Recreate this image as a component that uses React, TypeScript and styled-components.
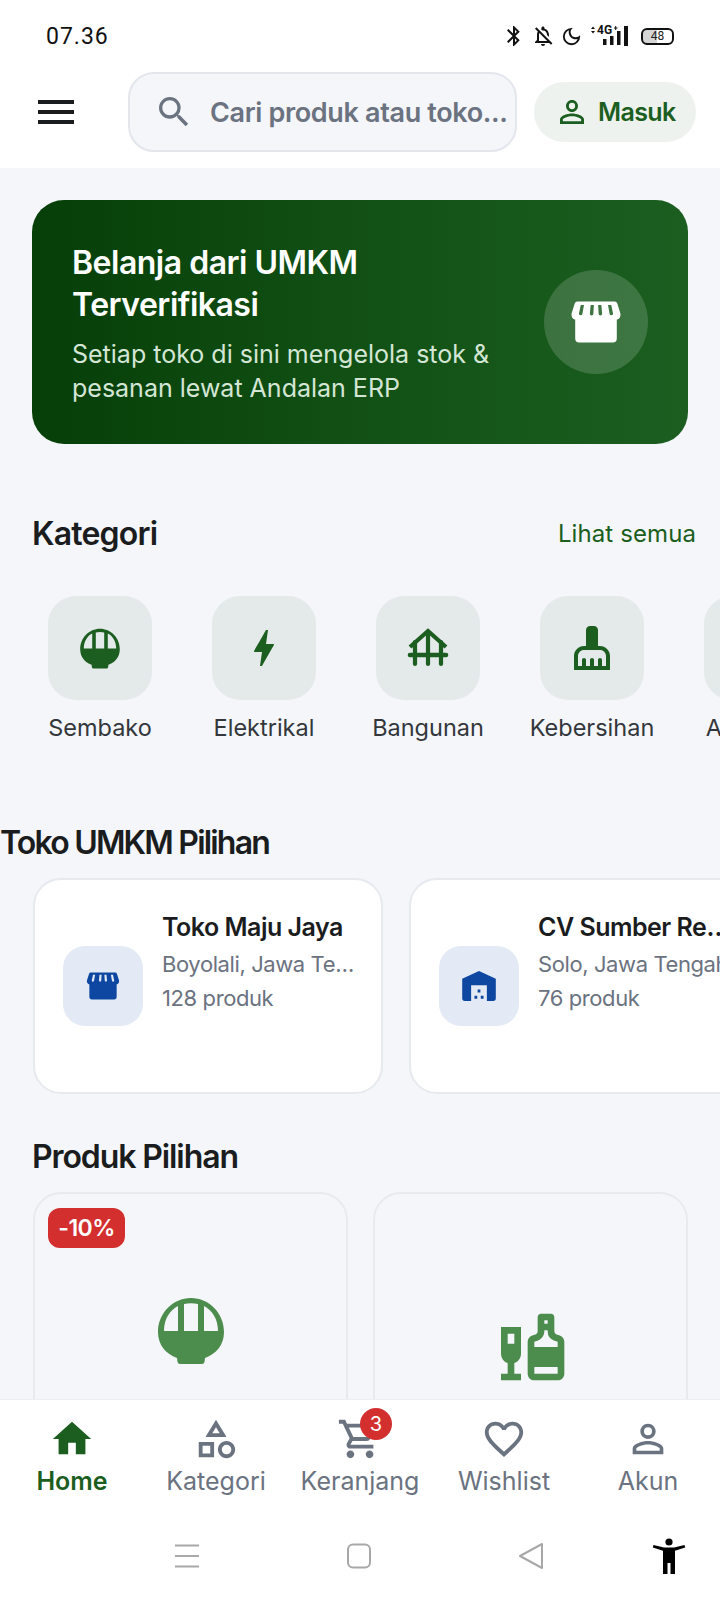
import React from "react";
import styled, { createGlobalStyle } from "styled-components";
import {
  MdBluetooth,
  MdBolt,
  MdCleaningServices,
  MdFavoriteBorder,
  MdHome,
  MdLiquor,
  MdMenu,
  MdOutlineCategory,
  MdOutlineDarkMode,
  MdOutlineNotificationsOff,
  MdOutlineShoppingCart,
  MdPersonOutline,
  MdSearch,
} from "react-icons/md";

const GREEN = "#1b5e20";
const BLUE = "#0d47a1";
const GREY = "#6b7280";

type IconProps = { size: number };

function RiceBowlIcon({ size }: IconProps) {
  return (
    <svg width={size} height={size} viewBox="0 0 80 80" fill="currentColor" fillRule="evenodd">
      <path d="M40 8C58 8 73 23 73 42C73 55 65 64 54 68L53.5 72Q53 74 51 74H29Q27 74 26.5 72L26 68C15 64 7 55 7 42C7 23 22 8 40 8ZM27 41H13C13 29 19 20 27 16ZM33 41H47V14Q40 12.5 33 14ZM53 41H67C67 29 61 20 53 16Z" />
    </svg>
  );
}

function StoreIcon({ size }: IconProps) {
  return (
    <svg width={size} height={size} viewBox="0 0 24 24" fill="currentColor" fillRule="evenodd">
      <path d="M5 4.3H19a1 1 0 0 1 .95.7L21.1 8.6a2.2 2.2 0 0 1-1.3 2.6V18.2a1.5 1.5 0 0 1-1.5 1.5H5.7a1.5 1.5 0 0 1-1.5-1.5V11.2a2.2 2.2 0 0 1-1.3-2.6L4.05 5a1 1 0 0 1 .95-.7Z M6.3 5.6h1.2L6.9 8.9a.6.6 0 0 1-1.3-.1Z M10 5.6h1.2L11 8.9a.6.6 0 0 1-1.3 0Z M12.8 5.6H14l.3 3.3a.6.6 0 0 1-1.3 0Z M16.5 5.6h1.2l.7 3.2a.6.6 0 0 1-1.3.1Z" />
    </svg>
  );
}

function WarehouseIcon({ size }: IconProps) {
  return (
    <svg width={size} height={size} viewBox="0 0 24 24" fill="currentColor" fillRule="evenodd">
      <path d="M12 3.4L21.6 7.8V19a1.5 1.5 0 0 1-1.5 1.5H3.9A1.5 1.5 0 0 1 2.4 19V7.8Z M7.5 11.5h9v9h-9Z M11.2 14h1.6v1.7h-1.6Z M9.4 17.6h1.6v1.7H9.4Z M13 17.6h1.6v1.7H13Z" />
    </svg>
  );
}

function StiltHouseIcon({ size }: IconProps) {
  return (
    <svg width={size} height={size} viewBox="0 0 48 48" fill="none" stroke="currentColor" strokeWidth="4.2">
      <path d="M6 23L24 7L42 23" />
      <path d="M11 18V40M24 8V40M37 18V40" strokeLinecap="round" />
      <path d="M6 31H42" strokeWidth="4.6" strokeLinecap="round" />
    </svg>
  );
}

const categories = [
  { label: "Sembako", Icon: RiceBowlIcon },
  { label: "Elektrikal", Icon: MdBolt },
  { label: "Bangunan", Icon: StiltHouseIcon },
  { label: "Kebersihan", Icon: MdCleaningServices },
  { label: "Alat Tulis", Icon: MdOutlineCategory },
];

const stores = [
  { name: "Toko Maju Jaya", place: "Boyolali, Jawa Tengah", count: "128 produk", Icon: StoreIcon },
  { name: "CV Sumber Rejeki", place: "Solo, Jawa Tengah", count: "76 produk", Icon: WarehouseIcon },
];

const navItems = [
  { label: "Home", Icon: MdHome, active: true },
  { label: "Kategori", Icon: MdOutlineCategory },
  { label: "Keranjang", Icon: MdOutlineShoppingCart, badge: "3" },
  { label: "Wishlist", Icon: MdFavoriteBorder },
  { label: "Akun", Icon: MdPersonOutline },
];

export default function App() {
  return (
    <>
      <GlobalStyle />
      <Screen>
        <TopArea>
          <StatusBar>
            <Clock>07.36</Clock>
            <StatusIcons>
              <MdBluetooth size={24} />
              <MdOutlineNotificationsOff size={24} />
              <MdOutlineDarkMode size={23} />
              <SignalIcon />
              <Battery>48</Battery>
            </StatusIcons>
          </StatusBar>
          <Header>
            <MenuButton>
              <MdMenu size={48} />
            </MenuButton>
            <SearchBox>
              <MdSearch size={40} />
              <SearchText>Cari produk atau toko...</SearchText>
            </SearchBox>
            <LoginButton>
              <MdPersonOutline size={36} />
              Masuk
            </LoginButton>
          </Header>
        </TopArea>

        <Content>
          <Hero>
            <HeroText>
              <HeroTitle>Belanja dari UMKM Terverifikasi</HeroTitle>
              <HeroSub>Setiap toko di sini mengelola stok &amp; pesanan lewat Andalan ERP</HeroSub>
            </HeroText>
            <HeroCircle>
              <StoreIcon size={64} />
            </HeroCircle>
          </Hero>

          <SectionHead>
            <SectionTitle>Kategori</SectionTitle>
            <SeeAll>Lihat semua</SeeAll>
          </SectionHead>
          <CategoryRow>
            {categories.map(({ label, Icon }) => (
              <Category key={label}>
                <CategoryTile>
                  <Icon size={48} />
                </CategoryTile>
                <CategoryLabel>{label}</CategoryLabel>
              </Category>
            ))}
          </CategoryRow>

          <StoreTitle>Toko UMKM Pilihan</StoreTitle>
          <StoreRow>
            {stores.map(({ name, place, count, Icon }) => (
              <StoreCard key={name}>
                <StoreTile>
                  <Icon size={42} />
                </StoreTile>
                <StoreInfo>
                  <StoreName>{name}</StoreName>
                  <StoreMeta>{place}</StoreMeta>
                  <StoreMeta>{count}</StoreMeta>
                </StoreInfo>
              </StoreCard>
            ))}
          </StoreRow>

          <ProductTitle>Produk Pilihan</ProductTitle>
          <ProductGrid>
            <ProductCard>
              <DiscountBadge>-10%</DiscountBadge>
              <ProductArt $top={96}>
                <RiceBowlIcon size={80} />
              </ProductArt>
            </ProductCard>
            <ProductCard>
              <ProductArt $top={113}>
                <MdLiquor size={80} />
              </ProductArt>
            </ProductCard>
          </ProductGrid>
        </Content>

        <BottomNav>
          {navItems.map(({ label, Icon, active, badge }) => (
            <NavItem key={label} $active={!!active}>
              <NavIcon>
                <Icon size={46} />
                {badge && <CartBadge>{badge}</CartBadge>}
              </NavIcon>
              <NavLabel $active={!!active}>{label}</NavLabel>
            </NavItem>
          ))}
        </BottomNav>

        <SystemBar>
          <SystemSlot>
            <svg width="26" height="26" viewBox="0 0 26 26" fill="none" stroke="#a8a8a8" strokeWidth="2">
              <path d="M1 2.5h24M1 13h24M1 23.5h24" />
            </svg>
          </SystemSlot>
          <SystemSlot>
            <svg width="26" height="26" viewBox="0 0 26 26" fill="none" stroke="#a8a8a8" strokeWidth="2">
              <rect x="2" y="1.5" width="22" height="23" rx="5" />
            </svg>
          </SystemSlot>
          <SystemSlot>
            <svg width="26" height="28" viewBox="0 0 26 28" fill="none" stroke="#a8a8a8" strokeWidth="2" strokeLinejoin="round">
              <path d="M24 2v24L2 14z" />
            </svg>
          </SystemSlot>
          <AccessSlot>
            <svg width="36" height="40" viewBox="0 0 36 40" fill="#000">
              <circle cx="18" cy="6" r="3.6" />
              <path d="M2.5 9 13 11.5h10L33.5 9l.7 2.6L24 14.8V38h-4.5V27h-3V38H12V14.8L1.8 11.6z" />
            </svg>
          </AccessSlot>
        </SystemBar>
      </Screen>
    </>
  );
}

function SignalIcon() {
  return (
    <SignalWrap>
      <SignalLabel>4G</SignalLabel>
      <svg width="38" height="20" viewBox="0 0 38 20" fill="#111">
        <path d="M1 3l2-2.5L5 3zM1 5l2 2.5L5 5z" />
        <path d="M24 1.5h1.2V0h1v1.5h1.3v1h-1.3V4h-1V2.5H24z" />
        <rect x="13" y="13" width="3.5" height="6" />
        <rect x="20" y="10" width="3.5" height="9" />
        <rect x="27" y="5" width="3.5" height="14" />
        <rect x="34" y="0" width="4" height="20" />
      </svg>
    </SignalWrap>
  );
}

const GlobalStyle = createGlobalStyle`
  html, body {
    margin: 0;
    padding: 0;
    background: #f4f6fa;
  }
  * {
    box-sizing: border-box;
  }
  body {
    font-family: Inter, "Noto Sans", sans-serif;
    color: #1a1c1e;
  }
`;

const Screen = styled.div`
  display: flex;
  flex-direction: column;
  width: 720px;
  height: 1600px;
  overflow: hidden;
  background: #f4f6fa;
`;

const TopArea = styled.div`
  flex: none;
  height: 168px;
  background: #fff;
`;

const StatusBar = styled.div`
  display: flex;
  align-items: center;
  justify-content: space-between;
  height: 72px;
  padding: 0 46px;
`;

const Clock = styled.span`
  font-family: Roboto, sans-serif;
  font-size: 23px;
  letter-spacing: 1px;
  color: #111;
`;

const StatusIcons = styled.div`
  display: flex;
  align-items: center;
  gap: 5px;
  color: #111;
`;

const SignalWrap = styled.div`
  position: relative;
  display: flex;
  width: 38px;
  height: 20px;
  margin-left: 2px;
`;

const SignalLabel = styled.span`
  position: absolute;
  left: 7px;
  top: -3px;
  font-family: Roboto, sans-serif;
  font-size: 12px;
  font-weight: 700;
  color: #111;
`;

const Battery = styled.span`
  display: flex;
  align-items: center;
  justify-content: center;
  width: 33px;
  height: 17px;
  margin-left: 8px;
  border: 2px solid #111;
  border-radius: 6px;
  background: linear-gradient(90deg, #d6d6d6 0 48%, #fff 48%);
  font-family: Roboto, sans-serif;
  font-size: 12px;
  color: #222;
`;

const Header = styled.div`
  display: flex;
  align-items: center;
  height: 80px;
  padding-left: 32px;
`;

const MenuButton = styled.div`
  display: flex;
  width: 48px;
  margin-right: 48px;
  color: #1a1c1e;
`;

const SearchBox = styled.div`
  display: flex;
  align-items: center;
  gap: 16px;
  width: 389px;
  height: 80px;
  padding: 0 4px 0 24px;
  border: 2px solid #e3e6ec;
  border-radius: 26px;
  background: #f4f6fa;
  color: ${GREY};
`;

const SearchText = styled.span`
  flex: 1;
  min-width: 0;
  overflow: hidden;
  white-space: nowrap;
  text-overflow: ellipsis;
  font-size: 27px;
  font-weight: 600;
  letter-spacing: -0.35px;
`;

const LoginButton = styled.div`
  display: flex;
  align-items: center;
  gap: 8px;
  width: 162px;
  height: 60px;
  margin-left: 17px;
  padding-left: 20px;
  border-radius: 30px;
  background: #eef2ee;
  color: ${GREEN};
  font-size: 25px;
  font-weight: 600;
  letter-spacing: -0.6px;
`;

const Content = styled.div`
  flex: 1;
  min-height: 0;
  overflow: hidden;
  padding-top: 32px;
`;

const Hero = styled.div`
  display: flex;
  align-items: center;
  justify-content: space-between;
  width: 656px;
  height: 244px;
  margin-left: 32px;
  padding: 0 40px;
  border-radius: 32px;
  background: linear-gradient(90deg, #063f08 0%, #135216 55%, #1b5e20 100%);
`;

const HeroText = styled.div`
  width: 430px;
  padding-top: 3px;
`;

const HeroTitle = styled.div`
  width: 320px;
  margin-bottom: 11px;
  font-size: 32px;
  font-weight: 600;
  line-height: 42px;
  letter-spacing: -0.5px;
  color: #fff;
`;

const HeroSub = styled.div`
  font-size: 25px;
  line-height: 34px;
  color: #d4e6d5;
`;

const HeroCircle = styled.div`
  display: flex;
  align-items: center;
  justify-content: center;
  flex: none;
  width: 104px;
  height: 104px;
  border-radius: 50%;
  background: rgba(255, 255, 255, 0.16);
  color: #fff;
`;

const SectionHead = styled.div`
  display: flex;
  align-items: center;
  justify-content: space-between;
  height: 44px;
  margin-top: 67px;
  padding: 0 24px 0 32px;
`;

const SectionTitle = styled.div`
  font-size: 32px;
  font-weight: 600;
  letter-spacing: -0.8px;
  color: #1a1c1e;
`;

const SeeAll = styled.div`
  font-size: 24px;
  font-weight: 400;
  letter-spacing: 0.1px;
  color: ${GREEN};
`;

const CategoryRow = styled.div`
  display: flex;
  gap: 24px;
  width: 900px;
  margin-top: 41px;
  padding-left: 30px;
`;

const Category = styled.div`
  display: flex;
  flex-direction: column;
  align-items: center;
  flex: none;
  width: 140px;
`;

const CategoryTile = styled.div`
  display: flex;
  align-items: center;
  justify-content: center;
  width: 104px;
  height: 104px;
  border-radius: 28px;
  background: #e4e9ea;
  color: ${GREEN};
`;

const CategoryLabel = styled.div`
  margin-top: 13px;
  font-size: 23.5px;
  font-weight: 400;
  line-height: 30px;
  white-space: nowrap;
  color: #33373b;
`;

const StoreTitle = styled(SectionTitle)`
  height: 44px;
  margin-top: 78px;
  line-height: 44px;
  letter-spacing: -1.8px;
`;

const StoreRow = styled.div`
  display: flex;
  gap: 26px;
  width: 1000px;
  margin-top: 13px;
  padding-left: 33px;
`;

const StoreCard = styled.div`
  display: flex;
  align-items: center;
  flex: none;
  gap: 19px;
  width: 350px;
  height: 216px;
  padding: 0 24px 0 28px;
  border: 2px solid #e6e9ee;
  border-radius: 28px;
  background: #fff;
`;

const StoreTile = styled.div`
  display: flex;
  align-items: center;
  justify-content: center;
  flex: none;
  width: 80px;
  height: 80px;
  border-radius: 22px;
  background: #e3eaf5;
  color: ${BLUE};
`;

const StoreInfo = styled.div`
  flex: 1;
  min-width: 0;
  align-self: flex-start;
  padding-top: 27px;
`;

const StoreName = styled.div`
  overflow: hidden;
  white-space: nowrap;
  text-overflow: ellipsis;
  font-size: 25px;
  font-weight: 600;
  line-height: 40px;
  letter-spacing: -0.5px;
  color: #1a1c1e;
`;

const StoreMeta = styled.div`
  overflow: hidden;
  white-space: nowrap;
  text-overflow: ellipsis;
  font-size: 22px;
  line-height: 34px;
  letter-spacing: -0.4px;
  color: ${GREY};
`;

const ProductTitle = styled(SectionTitle)`
  height: 44px;
  margin-top: 41px;
  padding-left: 32px;
  line-height: 44px;
  letter-spacing: -1.1px;
`;

const ProductGrid = styled.div`
  display: grid;
  grid-template-columns: 315px 315px;
  gap: 25px;
  margin-top: 13px;
  padding-left: 33px;
`;

const ProductCard = styled.div`
  position: relative;
  height: 360px;
  border: 2px solid #e8eaee;
  border-radius: 28px;
`;

const DiscountBadge = styled.div`
  position: absolute;
  top: 14px;
  left: 13px;
  display: flex;
  align-items: center;
  justify-content: center;
  width: 77px;
  height: 40px;
  border-radius: 12px;
  background: #d32f2f;
  color: #fff;
  font-size: 23px;
  font-weight: 600;
  letter-spacing: -0.6px;
`;

const ProductArt = styled.div<{ $top: number }>`
  display: flex;
  justify-content: center;
  padding-top: ${(p) => p.$top}px;
  color: #4c8c4c;
`;

const BottomNav = styled.div`
  display: grid;
  grid-template-columns: repeat(5, 1fr);
  flex: none;
  height: 121px;
  padding-top: 16px;
  background: #fff;
  border-top: 1px solid #eceef1;
`;

const NavItem = styled.div<{ $active: boolean }>`
  display: flex;
  flex-direction: column;
  align-items: center;
  color: ${(p) => (p.$active ? GREEN : GREY)};
`;

const NavIcon = styled.div`
  position: relative;
  display: flex;
  width: 46px;
  height: 46px;
`;

const CartBadge = styled.span`
  position: absolute;
  top: -8px;
  left: 23px;
  display: flex;
  align-items: center;
  justify-content: center;
  width: 32px;
  height: 32px;
  border-radius: 50%;
  background: #d32f2f;
  color: #fff;
  font-size: 20px;
`;

const NavLabel = styled.span<{ $active: boolean }>`
  margin-top: 3px;
  font-size: 25px;
  line-height: 32px;
  font-weight: ${(p) => (p.$active ? 600 : 400)};
`;

const SystemBar = styled.div`
  display: grid;
  grid-template-columns: 200px 172px 172px 1fr;
  align-items: center;
  flex: none;
  height: 80px;
  padding-bottom: 8px;
  background: #fff;
`;

const SystemSlot = styled.div`
  display: flex;
  justify-content: flex-end;
  color: #a8a8a8;
`;

const AccessSlot = styled.div`
  display: flex;
  justify-content: flex-end;
  padding-right: 33px;
  color: #000;
`;
